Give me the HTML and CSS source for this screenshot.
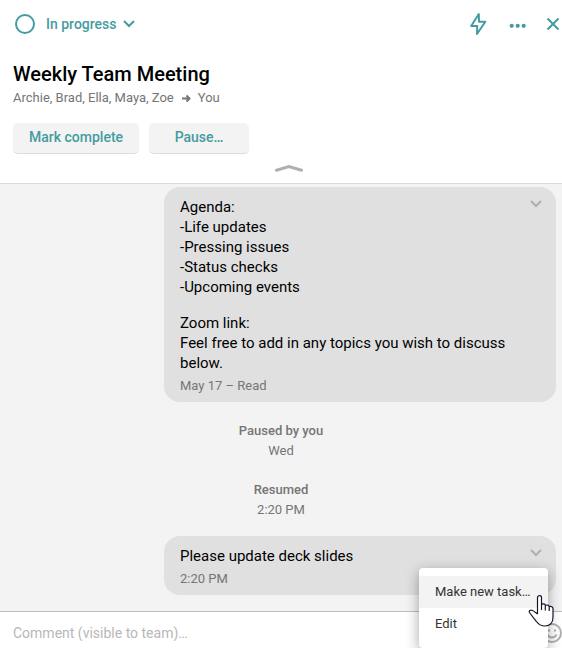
FILE: index.html
```html
<!DOCTYPE html>
<html lang="en">
<head>
  <meta charset="UTF-8" />
  <meta name="viewport" content="width=device-width, initial-scale=1.0"/>
  <title>Weekly Team Meeting</title>
  <link rel="stylesheet" href="styles.css">
</head>
<body>

  <header class="task-header">
    <div class="toolbar">
      <button class="status" type="button">
        <svg class="status-ring" width="24" height="24" viewBox="0 0 24 24"><circle cx="12" cy="12" r="9"/></svg>
        <span>In progress</span>
        <svg class="status-arrow" width="12" height="8" viewBox="0 0 12 8"><path d="M1 1l5 5 5-5"/></svg>
      </button>
      <div class="actions">
        <button type="button" aria-label="Automations">
          <svg class="bolt" width="18" height="24" viewBox="0 0 18 24"><path d="M8.800 2L1.200 14H7.200L7 22 15.300 9.800H9z"/></svg>
        </button>
        <button type="button" aria-label="More">
          <svg class="dots" width="18" height="24" viewBox="0 0 18 24"><circle cx="3.700" cy="13.800" r="2.100"/><circle cx="9.700" cy="13.800" r="2.100"/><circle cx="15.700" cy="13.800" r="2.100"/></svg>
        </button>
        <button type="button" aria-label="Close">
          <svg width="14" height="24" viewBox="0 0 14 24"><path d="M1.500 6.500l11 11M12.500 6.500l-11 11"/></svg>
        </button>
      </div>
    </div>

    <h1>Weekly Team Meeting</h1>
    <p class="people">
      <span>Archie, Brad, Ella, Maya, Zoe</span>
      <svg width="10" height="10" viewBox="0 0 10 10"><path d="M1 5.500h7.500M5.500 2.500l3 3-3 3"/></svg>
      <span>You</span>
    </p>

    <div class="task-buttons">
      <button type="button" class="btn btn-complete">Mark complete</button>
      <button type="button" class="btn btn-pause">Pause…</button>
    </div>

    <button type="button" class="collapse" aria-label="Collapse">
      <svg width="28" height="10" viewBox="0 0 28 10"><path d="M1.500 7.200L14 3.500l12.500 3.700"/></svg>
    </button>
  </header>

  <main class="thread">
    <article class="bubble">
      <button type="button" class="bubble-arrow" aria-label="Message options">
        <svg width="12" height="8" viewBox="0 0 12 8"><path d="M1 1l5 5 5-5"/></svg>
      </button>
      <p>Agenda:<br>
        -Life updates<br>
        -Pressing issues<br>
        -Status checks<br>
        -Upcoming events</p>
      <p>Zoom link:<br>
        Feel free to add in any topics you wish to discuss below.</p>
      <div class="meta">May 17 – Read</div>
    </article>

    <div class="event">
      <strong>Paused by you</strong>
      <span>Wed</span>
    </div>
    <div class="event">
      <strong>Resumed</strong>
      <span>2:20 PM</span>
    </div>

    <article class="bubble">
      <button type="button" class="bubble-arrow" aria-label="Message options">
        <svg width="12" height="8" viewBox="0 0 12 8"><path d="M1 1l5 5 5-5"/></svg>
      </button>
      <p>Please update deck slides</p>
      <div class="meta">2:20 PM</div>

      <div class="menu">
        <button type="button" class="active">Make new task…</button>
        <button type="button">Edit</button>
        <svg class="pointer" width="26" height="34" viewBox="0 0 26 34"><path d="M9.500 20V3.500C9.500 1 13.500 1 13.500 3.500V10.500C15 9.300 17.300 9.800 17.300 11.500 19 10.500 21 11 21.200 12.700 23 11.800 25 12.800 25 14.800V23C25 29 21.500 32 17 32 13 32 10.500 30.500 8.500 27.500 6.500 25 3.500 21.500 1.500 18.500 .500 16.800 2.500 15.500 4.500 16.500 6.500 17.300 7.500 18.500 9.500 20M13.500 10.500V16M17.300 11.500V16.500M21.200 12.700V17"/></svg>
      </div>
    </article>
  </main>

  <form class="composer">
    <input type="text" aria-label="Comment" placeholder="Comment (visible to team)…">
    <button type="button" aria-label="Add emoji">
      <svg width="20" height="20" viewBox="0 0 20 20"><circle cx="10" cy="10" r="9"/><path d="M5.500 11.500c1.500 4 7.500 4 9 0M7 6.500v2M13 6.500v2"/></svg>
    </button>
  </form>

</body>
</html>
```

FILE: styles.css
```css
* {
  margin: 0;
  padding: 0;
  box-sizing: border-box;
}
body {
  font-family: Roboto, sans-serif;
  font-size: 15px;
  line-height: 20px;
  min-height: 100vh;
  display: flex;
  flex-direction: column;
  background: #f3f3f3;
  color: #000;
}
button {
  font: inherit;
  color: inherit;
  background: none;
  border: none;
  cursor: pointer;
}
svg {
  display: block;
  fill: none;
  stroke: currentColor;
  stroke-width: 2;
}

/* header */
.task-header {
  background: #fff;
  border-bottom: 1px solid #dadada;
  padding-top: 12px;
}
.toolbar {
  display: flex;
  justify-content: space-between;
  align-items: center;
  padding: 0 2px 0 13px;
  color: #459c9f;
}
.status {
  display: flex;
  align-items: center;
  font-size: 14px;
  font-weight: 500;
}
.status-ring {
  margin-right: 9px;
}
.status-arrow {
  margin-left: 6px;
}
.actions {
  display: flex;
  gap: 20px;
}
.bolt {
  stroke-linejoin: round;
}
.dots {
  fill: currentColor;
  stroke: none;
}
h1 {
  font-size: 20px;
  font-weight: 500;
  line-height: 24px;
  margin-top: 26px;
  padding: 0 13px;
}
.people {
  display: flex;
  align-items: center;
  gap: 7px;
  padding: 2px 13px 0;
  font-size: 13px;
  color: #757575;
}
.task-buttons {
  display: flex;
  gap: 10px;
  padding: 15px 13px 0;
}
.btn {
  height: 31px;
  padding: 0 16px 2px;
  border-bottom: 1px solid #dcdcdc;
  border-radius: 5px;
  background: #f3f3f3;
  color: #459c9f;
  font-size: 14px;
  font-weight: 500;
}
.btn-pause {
  min-width: 100px;
}
.collapse {
  display: flex;
  justify-content: center;
  width: 100%;
  padding: 9px 0 10px 16px;
  color: #b0b0b0;
}
.collapse svg {
  stroke-width: 3;
  stroke-linecap: round;
}

/* messages */
.thread {
  flex: 1;
  padding: 3px 6px 16px 0;
}
.bubble {
  position: relative;
  margin-left: 164px;
  padding: 10px 16px 6px;
  border-radius: 16px;
  background: #e0e0e0;
}
.bubble p + p {
  margin-top: 16px;
}
.bubble-arrow {
  position: absolute;
  top: 13px;
  right: 14px;
  color: #b0b0b0;
}
.meta {
  margin-top: 3px;
  font-size: 13px;
  color: #757575;
}
.event {
  display: flex;
  flex-direction: column;
  align-items: center;
  margin: 19px -6px 16px 0;
  font-size: 13px;
  color: #757575;
}
.event strong {
  font-weight: 500;
}

/* message menu */
.menu {
  position: absolute;
  z-index: 2;
  top: 32px;
  right: 8px;
  min-width: 129px;
  padding: 8px 0;
  border-radius: 4px;
  background: #fff;
  box-shadow: 0 4px 14px rgba(0, 0, 0, 0.35);
}
.menu button {
  display: block;
  width: 100%;
  height: 32px;
  padding: 0 16px;
  font-size: 13px;
  text-align: left;
  white-space: nowrap;
  color: #333;
}
.menu .active {
  background: #f3f3f3;
}
.pointer {
  position: absolute;
  top: 26px;
  right: -6px;
  fill: #fff;
  stroke: #15152a;
  stroke-width: 1.2;
  stroke-linejoin: round;
}

/* comment box */
.composer {
  display: flex;
  align-items: center;
  height: 37px;
  padding: 6px 0 0 13px;
  border-top: 1px solid #bdbdbd;
  background: #fff;
}
.composer input {
  flex: 1;
  min-width: 0;
  border: none;
  outline: none;
  font: inherit;
  font-size: 14px;
}
.composer input::placeholder {
  color: #b8b8b8;
}
.composer button {
  color: #b0b0b0;
}
```
